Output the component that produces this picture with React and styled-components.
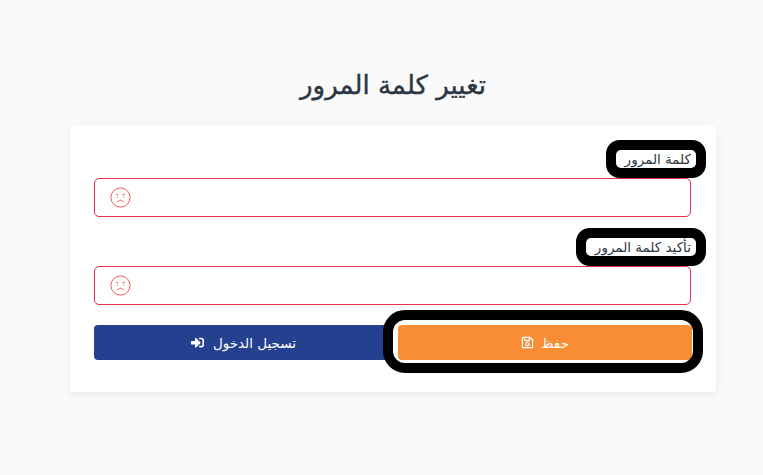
import { createGlobalStyle, styled } from "styled-components";
import { FaRegSave, FaSignInAlt } from "react-icons/fa";

const GlobalStyle = createGlobalStyle`
  html, body {
    margin: 0;
    height: 100%;
    background: #fafafa;
  }
  body {
    font-family: "DejaVu Sans", "Open Sans", sans-serif;
    color: #2b3643;
  }
`;

function SadFace() {
  return (
    <FaceSvg viewBox="0 0 21 21" fill="none" stroke="#ef5b60" strokeWidth="1">
      <circle cx="10.5" cy="10.5" r="9.6" />
      <path d="M6 7l2.4 1M15 7l-2.4 1" />
      <path d="M7.4 9.6v1.2M13.6 9.6v1.2" />
      <path d="M7 15.2c.9-1.3 2.2-2 3.5-2s2.6.7 3.5 2" />
    </FaceSvg>
  );
}

function PasswordField({ label }) {
  return (
    <Field>
      <LabelRow>
        <Label>{label}</Label>
      </LabelRow>
      <InputBox>
        <Input type="password" />
        <SadFace />
      </InputBox>
    </Field>
  );
}

export default function App() {
  return (
    <>
      <GlobalStyle />
      <Page dir="rtl">
        <Title>تغيير كلمة المرور</Title>
        <Card>
          <PasswordField label="كلمة المرور" />
          <PasswordField label="تأكيد كلمة المرور" />
          <Buttons>
            <SaveButton>
              حفظ
              <FaRegSave />
            </SaveButton>
            <LoginButton>
              تسجيل الدخول
              <FaSignInAlt />
            </LoginButton>
          </Buttons>
        </Card>
      </Page>
    </>
  );
}

const Page = styled.div`
  box-sizing: border-box;
  width: 763px;
  height: 475px;
  overflow: hidden;
  display: flex;
  flex-direction: column;
  align-items: center;
  padding: 65px 0 0 23px;
`;
const Title = styled.h1`
  margin: 0 0 20px;
  height: 40px;
  line-height: 40px;
  font-size: 26px;
  font-weight: 400;
  -webkit-text-stroke: 0.4px #2b3643;
  color: #2b3643;
`;
const Card = styled.div`
  box-sizing: border-box;
  width: 646px;
  height: 267px;
  padding: 24px 24px 0;
  background: #fff;
  border-radius: 4px;
  box-shadow: 0 2px 10px rgba(0, 0, 0, 0.07);
`;
const Field = styled.div`
  margin: 0 1px 20px 0;
`;
const LabelRow = styled.div`
  display: flex;
  height: 29px;
  align-items: flex-start;
`;
const Label = styled.label`
  margin: 1px -5px 0 0;
  padding: 0 5px 0 9px;
  font-size: 13.5px;
  line-height: 18px;
  background: #fff;
  color: #2b3643;
  border-radius: 5px;
  box-shadow: 0 0 0 10px #000;
`;
const InputBox = styled.div`
  position: relative;
  height: 39px;
`;
const Input = styled.input`
  box-sizing: border-box;
  display: block;
  width: 100%;
  height: 100%;
  border: 1px solid #e4314b;
  border-radius: 5px;
  background: #fff;
  outline: none;
`;
const FaceSvg = styled.svg`
  position: absolute;
  left: 15.5px;
  top: 8.5px;
  width: 21px;
  height: 21px;
`;
const Buttons = styled.div`
  display: flex;
  height: 35px;
`;
const BaseButton = styled.button`
  flex: 1;
  display: flex;
  align-items: center;
  justify-content: center;
  gap: 9px;
  padding: 0;
  border: 0;
  border-radius: 4px;
  font-family: inherit;
  font-size: 13.5px;
  color: #fff;
  svg {
    width: 13px;
    height: 13px;
  }
`;
const SaveButton = styled(BaseButton)`
  position: relative;
  z-index: 1;
  flex: 0 0 294px;
  gap: 7px;
  background: #f98d33;
  box-shadow: 0 0 0 5px #fff;
  &::before {
    content: "";
    position: absolute;
    top: -15px;
    right: -11px;
    bottom: -13px;
    left: -15px;
    border: 10px solid #000;
    border-radius: 22px;
    pointer-events: none;
  }
`;
const LoginButton = styled(BaseButton)`
  padding-right: 5px;
  background: #25408f;
`;
